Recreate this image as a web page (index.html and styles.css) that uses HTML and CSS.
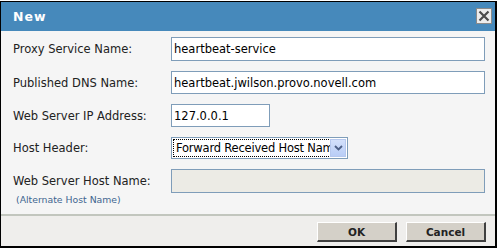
FILE: index.html
```html
<!DOCTYPE html>
<html>
<head>
<meta charset="utf-8">
<link rel="stylesheet" href="styles.css">
</head>
<body>
<div class="dialog">
  <div class="titlebar">
    <span class="title">New</span>
    <span class="close">
      <svg width="12" height="12" viewBox="0 0 12 12"><path d="M1.5 1.5 L10.5 10.5 M10.5 1.5 L1.5 10.5" stroke="#4a4a4a" stroke-width="2.2" fill="none"/></svg>
    </span>
  </div>
  <div class="content">
    <div class="form">
      <label class="lbl">Proxy Service Name:</label>
      <div class="field r1 wide">heartbeat-service</div>
      <label class="lbl">Published DNS Name:</label>
      <div class="field r2 wide">heartbeat.jwilson.provo.novell.com</div>
      <label class="lbl">Web Server IP Address:</label>
      <div class="field r3 short">127.0.0.1</div>
      <label class="lbl">Host Header:</label>
      <div class="select r4">
        <span class="sel-text"><span class="sel-inner">Forward Received Host Nam</span></span>
        <span class="sel-btn">
          <svg width="9" height="6" viewBox="0 0 9 6"><path d="M1 1 L4.5 4.5 L8 1" stroke="#4c5f86" stroke-width="1.8" fill="none"/></svg>
        </span>
      </div>
      <label class="lbl">Web Server Host Name:</label>
      <div class="field r5 wide disabled"></div>
      <div class="alt">(Alternate Host Name)</div>
    </div>
  </div>
  <div class="footer">
    <button class="btn">OK</button>
    <button class="btn">Cancel</button>
  </div>
</div>
</body>
</html>
```

FILE: styles.css
```css
html, body {
  margin: 0;
  padding: 0;
  background: #ffffff;
}
body {
  font-family: "DejaVu Sans", Verdana, sans-serif;
  font-size: 11.5px;
  color: #222;
}
.dialog {
  margin-top: 1px;
  width: 494px;
  border-top: 1px solid #000;
  border-left: 1px solid #000;
  border-right: 2px solid #000;
  border-bottom: 2px solid #000;
  background: #f5f5f5;
}
.titlebar {
  height: 29px;
  background: #4689bb;
  display: flex;
  align-items: center;
  justify-content: space-between;
  padding: 0 3px 0 12px;
}
.title {
  color: #fff;
  font-weight: bold;
  font-size: 12.5px;
  letter-spacing: 1px;
}
.close {
  width: 14px;
  height: 14px;
  border: 1px solid #8a8a8a;
  background: #ececec;
  display: flex;
  align-items: center;
  justify-content: center;
  margin-top: -1px;
}
.content {
  height: 183px;
  box-sizing: border-box;
  padding: 6px 0 0 12px;
}
.form {
  display: grid;
  grid-template-columns: 158px 1fr;
  row-gap: 10px;
  align-items: center;
}
.lbl {
  white-space: nowrap;
}
.field {
  box-sizing: border-box;
  height: 23px;
  border: 1px solid #7f9db9;
  background: #fff;
  color: #000;
  padding: 0 2px;
  display: flex;
  align-items: center;
  white-space: nowrap;
}
.wide { width: 314px; }
.short { width: 99px; }
.r1 { height: 24px; }
.disabled {
  background: #ecebe5;
  height: 24px;
}
.select {
  box-sizing: border-box;
  width: 177px;
  height: 22px;
  border: 1px solid #7f9db9;
  background: #fff;
  display: flex;
  align-items: stretch;
  padding: 1px;
}
.sel-text {
  flex: 1;
  min-width: 0;
  display: flex;
  align-items: stretch;
}
.sel-inner {
  flex: 1;
  border: 1px dotted #000;
  white-space: nowrap;
  color: #000;
  padding-left: 2px;
  display: flex;
  align-items: center;
  letter-spacing: -0.2px;
}
.sel-btn {
  width: 16px;
  background: linear-gradient(#d3e0fb, #b9cdf6);
  border: 1px solid #b6c8ee;
  box-sizing: border-box;
  display: flex;
  align-items: center;
  justify-content: center;
}
.alt {
  grid-column: 1;
  margin-top: -9px;
  padding-left: 3px;
  font-size: 9.3px;
  color: #3f6590;
  white-space: nowrap;
}
.footer {
  border-top: 2px solid #c2c6be;
  background: #efeeec;
  height: 32px;
  box-sizing: border-box;
  display: flex;
  justify-content: flex-end;
  align-items: flex-start;
  gap: 9px;
  padding: 6px 9px 0 0;
}
.btn {
  width: 80px;
  height: 20px;
  box-sizing: border-box;
  background: #d4d0c8;
  border-top: 1px solid #fff;
  border-left: 1px solid #fff;
  border-right: 2px solid #404040;
  border-bottom: 2px solid #404040;
  font-family: "DejaVu Sans", Verdana, sans-serif;
  font-weight: bold;
  font-size: 10.5px;
  color: #222;
  padding: 0;
  margin: 0;
}
```
